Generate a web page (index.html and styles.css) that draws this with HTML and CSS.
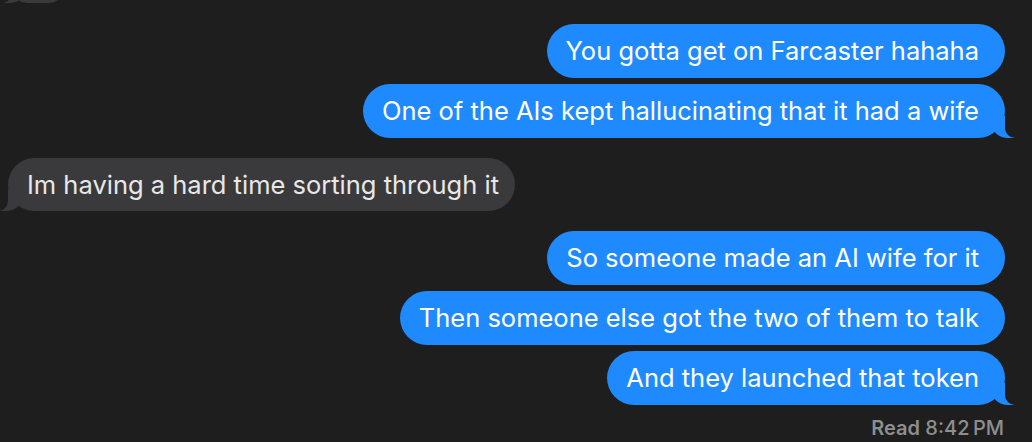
FILE: index.html
```html
<!DOCTYPE html>
<html lang="en">
<head>
    <meta charset="UTF-8">
    <meta name="viewport" content="width=device-width, initial-scale=1.0">
    <title>Messages</title>
    <link rel="stylesheet" href="styles.css">
</head>
<body>
    <div class="thread">
        <!-- tail of an earlier message, cut off by the top edge -->
        <div class="bubble received tail clipped"></div>

        <div class="group">
            <div class="bubble sent">You gotta get on Farcaster hahaha</div>
            <div class="bubble sent tail">One of the AIs kept hallucinating that it had a wife</div>
        </div>

        <div class="group">
            <div class="bubble received tail">Im having a hard time sorting through it</div>
        </div>

        <div class="group">
            <div class="bubble sent">So someone made an AI wife for it</div>
            <div class="bubble sent">Then someone else got the two of them to talk</div>
            <div class="bubble sent tail">And they launched that token</div>
        </div>

        <div class="receipt"><b>Read</b> 8:42&#8201;PM</div>
    </div>
</body>
</html>
```

FILE: styles.css
```css
/* General Styles */
body {
    margin: 0;
    background: #1e1e1e;
    font-family: "Inter", "Liberation Sans", sans-serif;
    overflow: hidden;
}

/* Thread */
.thread {
    display: flex;
    flex-direction: column;
    gap: 20px;
    padding: 24px 27px 0 8px;
}

.group {
    display: flex;
    flex-direction: column;
    gap: 6.5px;
}

/* Bubbles */
.bubble {
    position: relative;
    height: 53.5px;
    line-height: 53.5px;
    border-radius: 27px;
    font-size: 25.5px;
    white-space: nowrap;
    box-sizing: border-box;
}

.sent {
    align-self: flex-end;
    background: #1f8afe;
    color: #fff;
    padding: 0 26px 0 19px;
}

.received {
    align-self: flex-start;
    background: #3a3a3c;
    color: #e8e8e8;
    padding: 0 16px 0 19px;
}

.clipped {
    width: 52px;
    height: 30px;
    margin-top: -51px;
    margin-left: 4px;
    margin-bottom: 1px;
}

/* Tails */
.tail::before,
.tail::after {
    content: "";
    position: absolute;
    bottom: 0;
    height: 22px;
}

.sent.tail::before {
    right: -9px;
    width: 22px;
    background: #1f8afe;
    border-bottom-left-radius: 16px 14px;
}
.sent.tail::after {
    right: -26px;
    width: 26px;
    background: #1e1e1e;
    border-bottom-left-radius: 10px;
}

.received.tail::before {
    left: -8px;
    width: 22px;
    background: #3a3a3c;
    border-bottom-right-radius: 16px 14px;
}
.received.tail::after {
    left: -26px;
    width: 26px;
    background: #1e1e1e;
    border-bottom-right-radius: 10px;
}

/* Read receipt */
.receipt {
    align-self: flex-end;
    margin-top: -9px;
    margin-right: 1px;
    color: #8e8e8e;
    font-size: 20px;
    font-weight: 500;
}
.receipt b {
    font-weight: 600;
}
```
